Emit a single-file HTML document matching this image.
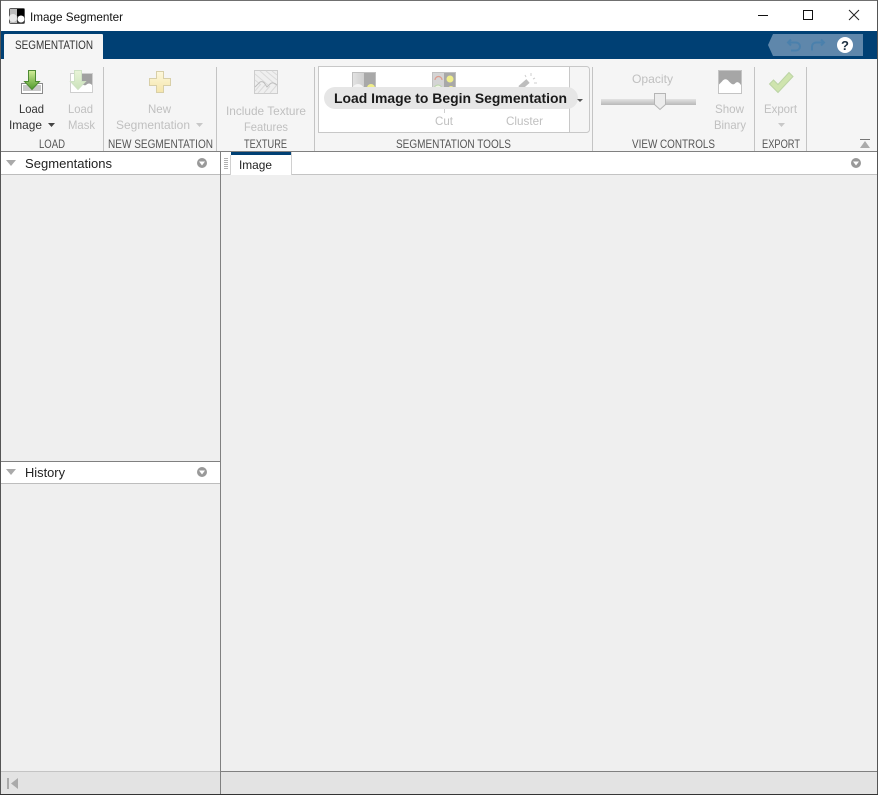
<!DOCTYPE html>
<html><head><meta charset="utf-8"><title>Image Segmenter</title>
<style>
html,body{margin:0;padding:0;background:#efefef;width:878px;height:795px;overflow:hidden}
svg{display:block}
text{font-family:"Liberation Sans",sans-serif;font-size:12px;fill:#333}
.d{fill:#c0c0c0}
.l{fill:#555}
.t{fill:#222}
</style></head><body>
<svg xmlns="http://www.w3.org/2000/svg" width="878" height="795" viewBox="0 0 878 795">
<defs>
<linearGradient id="g" x1="0" y1="0" x2="0" y2="1"><stop offset="0" stop-color="#d4ee9a"/><stop offset="1" stop-color="#4f9a2a"/></linearGradient>
<linearGradient id="gd" x1="0" y1="0" x2="0" y2="1"><stop offset="0" stop-color="#e9f4d8"/><stop offset="1" stop-color="#cbe3bb"/></linearGradient>
<linearGradient id="y" x1="0" y1="0" x2="0" y2="1"><stop offset="0" stop-color="#fdf8dc"/><stop offset="1" stop-color="#f5e5ab"/></linearGradient>
<linearGradient id="s" x1="0" y1="0" x2="0" y2="1"><stop offset="0" stop-color="#e2e2e2"/><stop offset="1" stop-color="#b8b8b8"/></linearGradient>
<linearGradient id="ig" x1="0" y1="0" x2="1" y2="0"><stop offset="0" stop-color="#e2e2e2"/><stop offset="1" stop-color="#cfcfcf"/></linearGradient>
</defs>

<rect width="878" height="795" fill="#efefef"/>
<!-- title bar -->
<rect x="1" y="1" width="876" height="30" fill="#fff"/>
<rect x="9" y="8" width="16" height="16" rx="2" fill="#555"/>
<rect x="10" y="9" width="7" height="14" fill="#bbb"/>
<circle cx="13" cy="18" r="4" fill="#e8e8e8"/>
<rect x="17" y="9" width="7" height="7" fill="#000"/>
<rect x="17" y="16" width="7" height="7" fill="#333"/>
<circle cx="21" cy="19" r="3.500" fill="#fff"/>
<text x="30" y="21" textLength="93" lengthAdjust="spacingAndGlyphs" style="fill:#111">Image Segmenter</text>
<rect x="758" y="15" width="10" height="1" fill="#111"/>
<rect x="803.500" y="10.500" width="9" height="9" fill="none" stroke="#111"/>
<path d="M849 10L859 20M859 10L849 20" stroke="#222" stroke-width="1" fill="none"/>

<!-- blue bar -->
<rect x="1" y="31" width="876" height="28" fill="#004074"/>
<path d="M5 34H102a1 1 0 0 1 1 1V59H4V35a1 1 0 0 1 1-1z" fill="#f5f5f5"/>
<text x="15" y="49" textLength="78" lengthAdjust="spacingAndGlyphs">SEGMENTATION</text>
<path d="M773 34H863V56H773L768 45z" fill="#5f87ab"/>
<path d="M788 42.500h8a4 4 0 0 1 0 8h-5M791 39.500l-3 3 3 3" fill="none" stroke="#4a80ac" stroke-width="2"/>
<path d="M824 42.500h-8a4 4 0 0 0-4 4v4M821 39.500l3 3-3 3" fill="none" stroke="#4a80ac" stroke-width="2"/>
<circle cx="845" cy="45" r="8" fill="#fff"/>
<text x="841" y="50" style="font-size:13px;font-weight:bold;fill:#1d2f40">?</text>

<!-- ribbon -->
<rect x="1" y="59" width="876" height="92" fill="#f5f5f5"/>
<rect x="1" y="151" width="876" height="1" fill="#808080"/>
<g fill="#c4c4c4">
<rect x="103" y="67" width="1" height="84"/><rect x="216" y="67" width="1" height="84"/>
<rect x="314" y="67" width="1" height="84"/><rect x="592" y="67" width="1" height="84"/>
<rect x="754" y="67" width="1" height="84"/><rect x="806" y="67" width="1" height="84"/>
</g>

<!-- load image -->
<rect x="21.500" y="83.500" width="21" height="10" fill="#fff" stroke="#8a8a8a"/>
<rect x="23" y="85" width="18" height="6" fill="#c9c9c9"/>
<path d="M28.500 70.500h7v11h4l-7.500 8-7.500-8h4z" fill="url(#g)" stroke="#4e8a34"/>
<text x="19" y="113" textLength="25" lengthAdjust="spacingAndGlyphs">Load</text>
<text x="9" y="129" textLength="33" lengthAdjust="spacingAndGlyphs">Image</text>
<path d="M48 123h7l-3.500 4z" fill="#444"/>
<!-- load mask -->
<rect x="70.500" y="73.500" width="22" height="19" fill="#fff" stroke="#cfcfcf"/>
<path d="M80 74h12v11c-2-2-4-2-6 0c-2 1-3-1-6-1z" fill="#a0a0a0"/>
<path d="M74.500 70.500h7v11h4l-7.500 8-7.500-8h4z" fill="url(#gd)" stroke="#cfe2c4"/>
<text class="d" x="68" y="113" textLength="25" lengthAdjust="spacingAndGlyphs">Load</text>
<text class="d" x="68" y="129" textLength="27" lengthAdjust="spacingAndGlyphs">Mask</text>

<!-- new segmentation -->
<path d="M156.500 71.500h7v7h7v7h-7v7h-7v-7h-7v-7h7z" fill="url(#y)" stroke="#d8cfa8"/>
<text class="d" x="148" y="113" textLength="23" lengthAdjust="spacingAndGlyphs">New</text>
<text class="d" x="116" y="129" textLength="74" lengthAdjust="spacingAndGlyphs">Segmentation</text>
<path d="M196 123h7l-3.500 4z" fill="#c8c8c8"/>

<!-- texture -->
<rect x="254.500" y="70.500" width="23" height="23" fill="#efefef" stroke="#cdcdcd"/>
<path d="M260 71l17 15M266 71l11 9M272 71l5 4M255 74l13 11M255 80l6 5M258 93l7-8M264 93l6-7M270 93l6-7M255 91l5-6" stroke="#dadada" fill="none"/>
<path d="M255 87l5-5c2-1 4 0 5 2l2 3 3-3c2-2 5-1 7 1" stroke="#bdbdbd" fill="none"/>
<text class="d" x="226" y="115" textLength="80" lengthAdjust="spacingAndGlyphs">Include Texture</text>
<text class="d" x="244" y="131" textLength="44" lengthAdjust="spacingAndGlyphs">Features</text>

<!-- gallery -->
<rect x="318.500" y="66.500" width="271" height="66" rx="3" fill="#f5f5f5" stroke="#c8c8c8"/>
<rect x="318.500" y="66.500" width="251" height="66" fill="#fff" stroke="#c8c8c8"/>
<rect x="352.500" y="72.500" width="23" height="18" fill="#a8a8a8" stroke="#c0c0c0"/>
<rect x="353" y="73" width="11" height="17" fill="url(#ig)"/>
<circle cx="358" cy="90" r="6" fill="#f4f4f4"/>
<circle cx="371" cy="88" r="4" fill="#f0ee8a"/>
<rect x="432.500" y="72.500" width="23" height="18" fill="#a8a8a8" stroke="#c0c0c0"/>
<rect x="433" y="73" width="11" height="17" fill="#d4d4d4"/>
<path d="M435 80a3.500 3.500 0 0 1 7 0" fill="none" stroke="#dd9c8e" stroke-width="1.200"/>
<circle cx="438" cy="89" r="4" fill="#eef5e4" stroke="#b8d4a8"/>
<circle cx="450" cy="79" r="3.500" fill="#f0ee8a"/>
<circle cx="451" cy="89" r="3" fill="#f0ee8a"/>
<path d="M520 88l8-7" stroke="#bdbdbd" stroke-width="5" fill="none"/>
<path d="M531 73v3M535 78l-2 1M537 83h-3M525 75l1 2" stroke="#cfcfcf" fill="none"/>
<rect x="444" y="108" width="1" height="5" fill="#cfcfcf"/>
<text class="d" x="435" y="125" textLength="18" lengthAdjust="spacingAndGlyphs">Cut</text>
<text class="d" x="506" y="125" textLength="37" lengthAdjust="spacingAndGlyphs">Cluster</text>
<rect x="324" y="87" width="254" height="22" rx="11" fill="#e6e6e6"/>
<text x="334" y="103" textLength="233" lengthAdjust="spacingAndGlyphs" style="font-size:14px;font-weight:bold;fill:#1a1a1a">Load Image to Begin Segmentation</text>
<path d="M577 99h6l-3 3z" fill="#555"/>

<!-- view controls -->
<text class="d" x="632" y="83" textLength="41" lengthAdjust="spacingAndGlyphs">Opacity</text>
<rect x="601" y="99" width="95" height="6" fill="url(#s)"/>
<path d="M654.500 93.500h11v11l-5.500 5-5.500-5z" fill="#ececec" stroke="#b5b5b5"/>
<rect x="718.500" y="70.500" width="23" height="23" fill="#fff" stroke="#c4c4c4"/>
<path d="M719 71h22v14c-2-3-4-4-6-1.500c-2 2-4 0-6-2c-2-3-5-3-7 0l-3 3z" fill="#a6a6a6"/>
<text class="d" x="715" y="113" textLength="29" lengthAdjust="spacingAndGlyphs">Show</text>
<text class="d" x="714" y="129" textLength="32" lengthAdjust="spacingAndGlyphs">Binary</text>

<!-- export -->
<path d="M769.500 84l4-4 4.500 4.500 11-12 4 4-15 16z" fill="#cfe4ae" stroke="#bcd4a6"/>
<text class="d" x="764" y="113" textLength="33" lengthAdjust="spacingAndGlyphs">Export</text>
<path d="M778 123h7l-3.500 4z" fill="#c8c8c8"/>

<!-- collapse -->
<rect x="860" y="139" width="10" height="1" fill="#777"/>
<path d="M865 141l5 7h-10z" fill="#aaa"/>

<!-- section labels -->
<text class="l" x="39" y="148" textLength="26" lengthAdjust="spacingAndGlyphs">LOAD</text>
<text class="l" x="108" y="148" textLength="105" lengthAdjust="spacingAndGlyphs">NEW SEGMENTATION</text>
<text class="l" x="244" y="148" textLength="43" lengthAdjust="spacingAndGlyphs">TEXTURE</text>
<text class="l" x="396" y="148" textLength="115" lengthAdjust="spacingAndGlyphs">SEGMENTATION TOOLS</text>
<text class="l" x="632" y="148" textLength="83" lengthAdjust="spacingAndGlyphs">VIEW CONTROLS</text>
<text class="l" x="762" y="148" textLength="38" lengthAdjust="spacingAndGlyphs">EXPORT</text>

<!-- left panel headers -->
<rect x="1" y="152" width="219" height="22" fill="#fff"/>
<rect x="1" y="174" width="219" height="1" fill="#bdbdbd"/>
<path d="M6 160h10l-5 6z" fill="#aaa"/>
<text class="t" x="25" y="168" textLength="87" lengthAdjust="spacingAndGlyphs" style="font-size:13px">Segmentations</text>
<circle cx="202" cy="163" r="5" fill="#999"/>
<path d="M199 161.500h6l-3 4z" fill="#fff"/>

<rect x="1" y="461" width="219" height="1" fill="#808080"/>
<rect x="1" y="462" width="219" height="21" fill="#fff"/>
<rect x="1" y="483" width="219" height="1" fill="#bdbdbd"/>
<path d="M6 469h10l-5 6z" fill="#aaa"/>
<text class="t" x="25" y="477" textLength="40" lengthAdjust="spacingAndGlyphs" style="font-size:13px">History</text>
<circle cx="202" cy="472" r="5" fill="#999"/>
<path d="M199 470.500h6l-3 4z" fill="#fff"/>

<!-- right header -->
<rect x="221" y="152" width="656" height="22" fill="#fff"/>
<rect x="221" y="174" width="656" height="1" fill="#c4c4c4"/>
<path d="M224 158.500h4M224 160.500h4M224 162.500h4M224 164.500h4M224 166.500h4M224 168.500h4" stroke="#b0b0b0" fill="none"/>
<rect x="231" y="152" width="60" height="23" fill="#fff"/>
<rect x="231" y="152" width="60" height="3" fill="#004074"/>
<rect x="230" y="155" width="1" height="20" fill="#d0d0d0"/>
<rect x="291" y="152" width="1" height="23" fill="#d0d0d0"/>
<text class="t" x="239" y="169" textLength="33" lengthAdjust="spacingAndGlyphs">Image</text>
<circle cx="856" cy="163" r="5" fill="#999"/>
<path d="M853 161.500h6l-3 4z" fill="#fff"/>

<!-- divider and bottom -->
<rect x="220" y="152" width="1" height="642" fill="#808080"/>
<rect x="1" y="771" width="219" height="1" fill="#c4c4c4"/>
<rect x="221" y="771" width="656" height="1" fill="#808080"/>
<rect x="1" y="772" width="219" height="22" fill="#e3e3e3"/>
<rect x="221" y="772" width="656" height="22" fill="#e3e3e3"/>
<rect x="7" y="778" width="2" height="11" fill="#aaa"/>
<path d="M18 778v11l-7-5.500z" fill="#aaa"/>

<!-- window border -->
<rect x="0" y="0" width="878" height="1" fill="#707070"/>
<rect x="0" y="0" width="1" height="795" fill="#555"/>
<rect x="877" y="0" width="1" height="795" fill="#555"/>
<rect x="0" y="794" width="878" height="1" fill="#333"/>
</svg>
</body></html>
